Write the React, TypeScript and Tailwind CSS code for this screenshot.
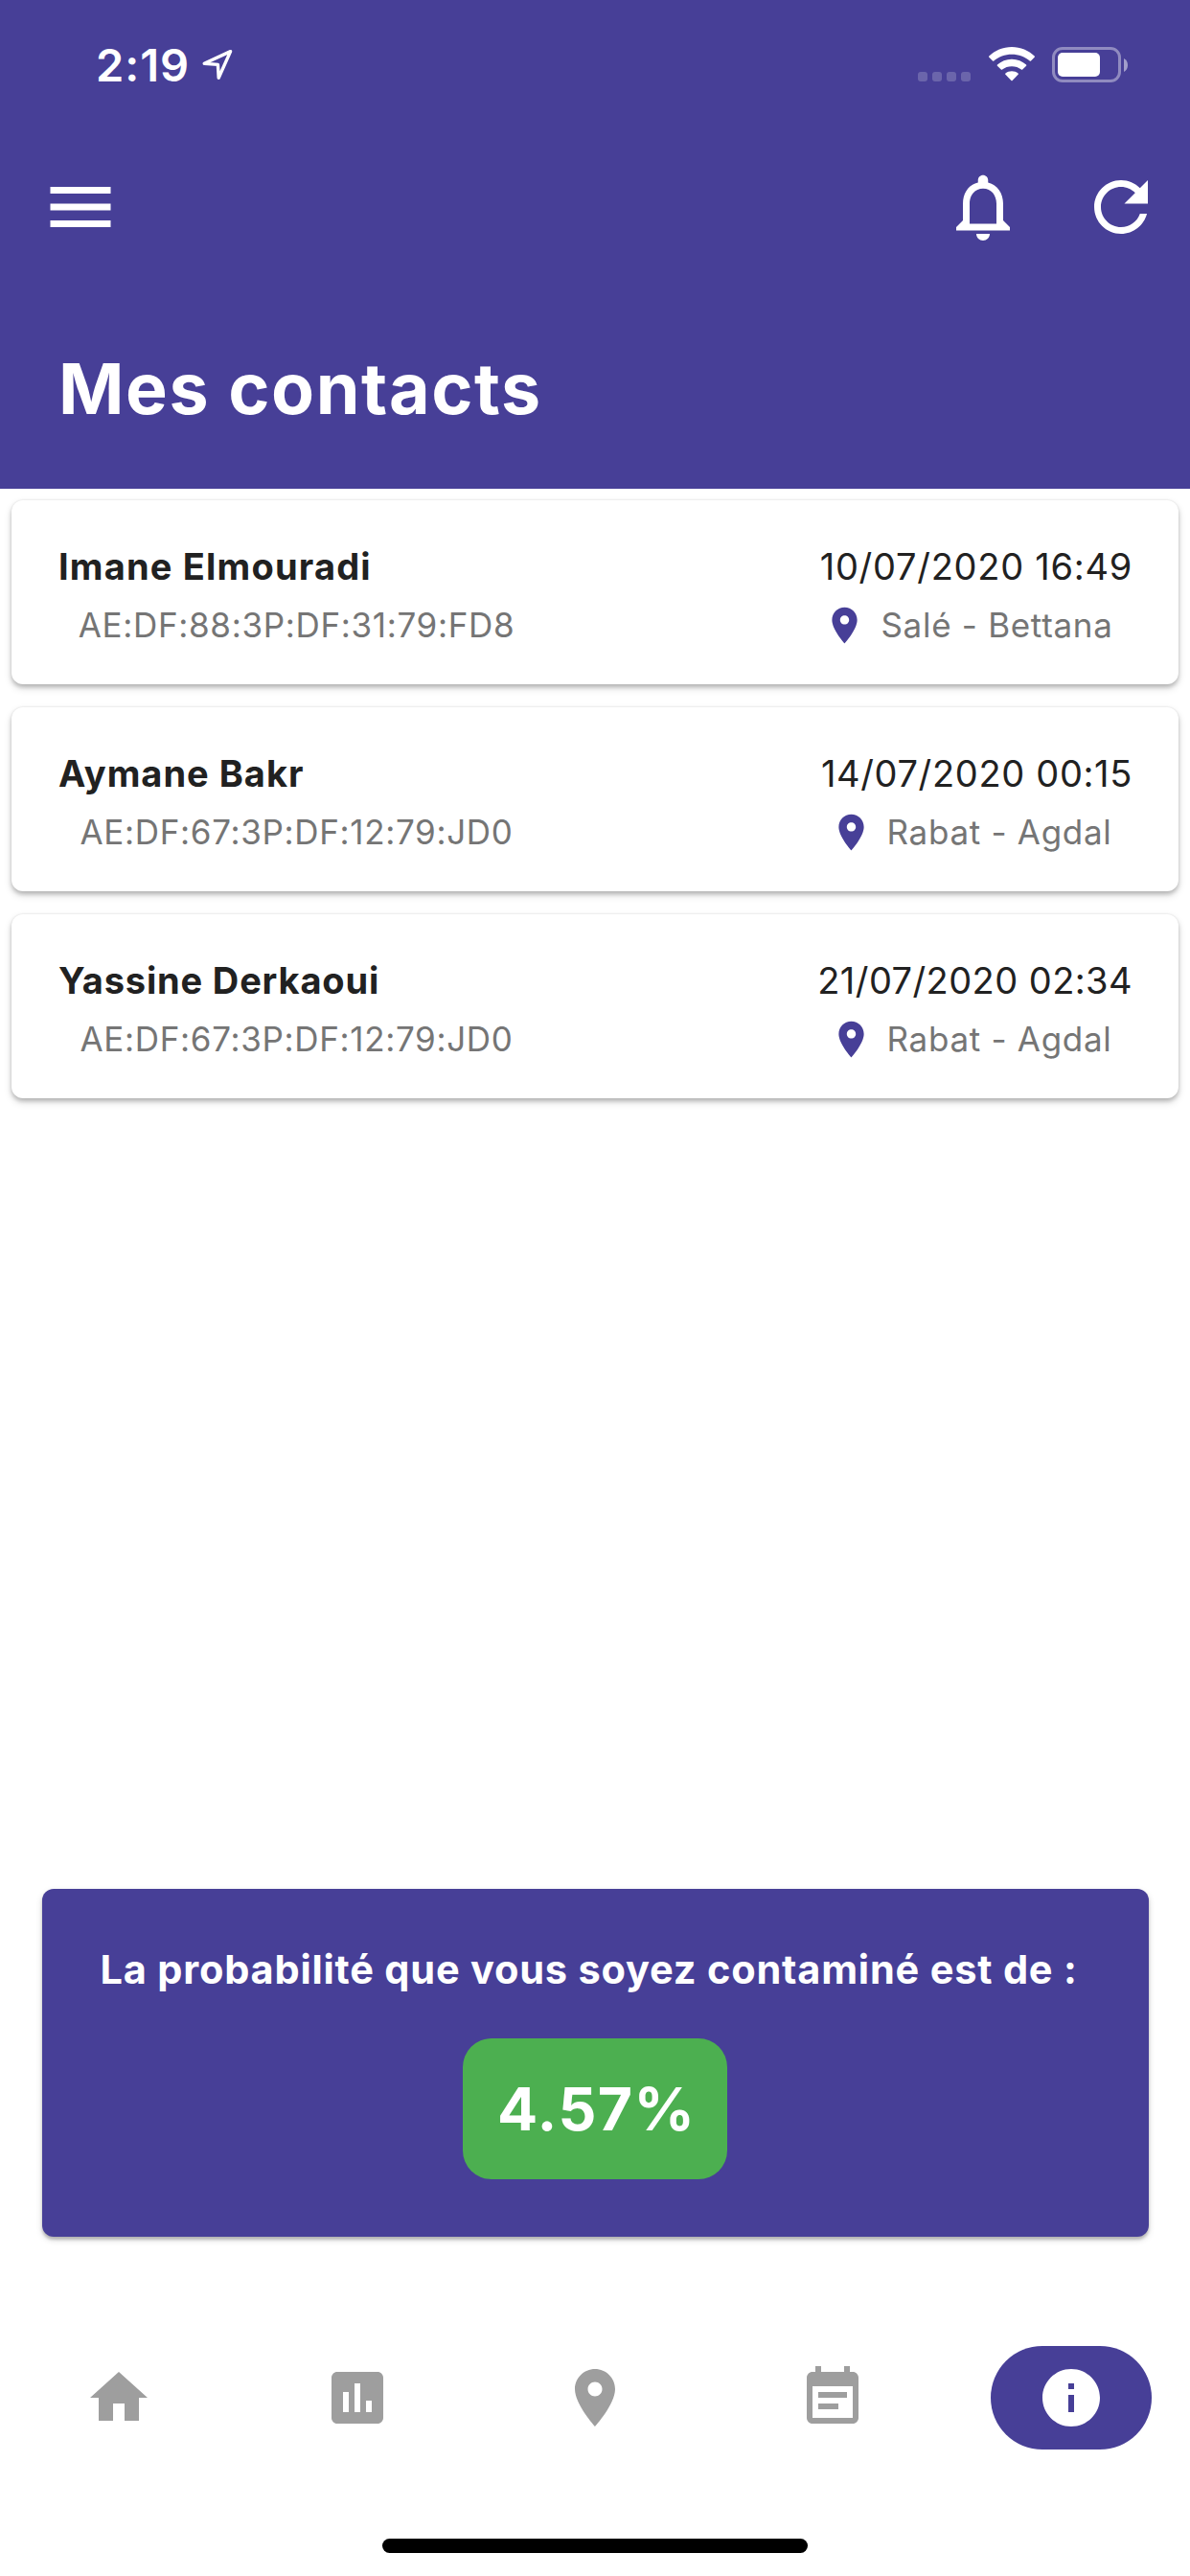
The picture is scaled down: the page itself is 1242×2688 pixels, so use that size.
import type { ReactNode } from "react";

const contacts = [
  {
    name: "Imane Elmouradi",
    nameTracking: "tracking-[1.19px]",
    device: "AE:DF:88:3P:DF:31:79:FD8",
    date: "10/07/2020 16:49",
    dateTracking: "tracking-[0.73px]",
    place: "Salé - Bettana",
    placeInset: "pr-px",
  },
  {
    name: "Aymane Bakr",
    nameTracking: "tracking-[1px]",
    device: "AE:DF:67:3P:DF:12:79:JD0",
    date: "14/07/2020 00:15",
    dateTracking: "tracking-[0.66px]",
    place: "Rabat - Agdal",
    placeInset: "pl-1",
  },
  {
    name: "Yassine Derkaoui",
    nameTracking: "tracking-[0.84px]",
    device: "AE:DF:67:3P:DF:12:79:JD0",
    date: "21/07/2020 02:34",
    dateTracking: "tracking-[0.43px]",
    place: "Rabat - Agdal",
    placeInset: "pl-1",
  },
];

const icons = {
  menu: "M3 18h18v-2H3v2zm0-5h18v-2H3v2zm0-7v2h18V6H3z",
  bell: "M12 22c1.1 0 2-.9 2-2h-4c0 1.1.9 2 2 2zm6-6v-5c0-3.07-1.63-5.64-4.5-6.32V4c0-.83-.67-1.5-1.5-1.5s-1.5.67-1.5 1.5v.68C7.64 5.36 6 7.92 6 11v5l-2 2v1h16v-1l-2-2zm-2 1H8v-6c0-2.48 1.51-4.5 4-4.5s4 2.02 4 4.5v6z",
  refresh:
    "M17.65 6.35C16.2 4.9 14.21 4 12 4c-4.42 0-7.99 3.58-7.99 8s3.57 8 7.99 8c3.73 0 6.84-2.55 7.73-6h-2.08c-.82 2.33-3.04 4-5.65 4-3.31 0-6-2.69-6-6s2.69-6 6-6c1.66 0 3.14.69 4.22 1.78L13 11h7V4l-2.35 2.35z",
  pin: "M12 2C8.13 2 5 5.13 5 9c0 5.25 7 13 7 13s7-7.75 7-13c0-3.87-3.13-7-7-7zm0 9.5c-1.38 0-2.5-1.12-2.5-2.5s1.12-2.5 2.5-2.5 2.5 1.12 2.5 2.5-1.12 2.5-2.5 2.5z",
  home: "M10 20v-6h4v6h5v-8h3L12 3 2 12h3v8z",
  chart:
    "M19 3H5c-1.1 0-2 .9-2 2v14c0 1.1.9 2 2 2h14c1.1 0 2-.9 2-2V5c0-1.1-.9-2-2-2zM9 17H7v-7h2v7zm4 0h-2V7h2v10zm4 0h-2v-4h2v4z",
  event:
    "M17 10H7v2h10v-2zm2-7h-1V1h-2v2H8V1H6v2H5c-1.11 0-1.99.9-1.99 2L3 19c0 1.1.89 2 2 2h14c1.1 0 2-.9 2-2V5c0-1.1-.9-2-2-2zm0 16H5V8h14v11zm-5-5H7v2h7v-2z",
  info: "M12 2C6.48 2 2 6.48 2 12s4.48 10 10 10 10-4.48 10-10S17.52 2 12 2zm1 15h-2v-6h2v6zm0-8h-2V7h2v2z",
};

function Icon({ name, className }: { name: keyof typeof icons; className: string }) {
  return (
    <svg viewBox="0 0 24 24" fill="currentColor" className={`block shrink-0 ${className}`} aria-hidden="true">
      <path d={icons[name]} />
    </svg>
  );
}

function StatusBar() {
  return (
    <div className="flex h-[135px] items-start justify-between pr-[65px] pl-[100px]">
      <div className="flex h-[135px] items-center">
        <span className="text-[47px] leading-none font-semibold tracking-[0.95px]">2:19</span>
        <svg viewBox="0 0 34 34" className="-mt-px ml-[12px] block h-[34px] w-[34px]" aria-hidden="true">
          <path
            d="M30.6 3.6 3.2 16.2 17.4 17.4 18.2 31.2Z"
            fill="none"
            stroke="white"
            strokeWidth="3.4"
            strokeLinejoin="round"
          />
        </svg>
      </div>
      <div className="flex h-[135px] items-center">
        <div className="mt-[25px] mr-[19px] flex gap-[5px]">
          {[0, 1, 2, 3].map((i) => (
            <span key={i} className="h-[10px] w-[10px] rounded-[3px] bg-white/20" />
          ))}
        </div>
        <svg viewBox="0 0 48 36" className="-mt-px block h-[36px] w-[48px]" fill="white" aria-hidden="true">
          <path d="M24 0C14.8 0 6.400 3.600.3 9.500Q-.2 10.200.3 10.800L4 14.500Q4.600 15 5.300 14.500C10.200 10.200 16.800 7.700 24 7.700S37.800 10.200 42.700 14.500Q43.400 15 44 14.500L47.700 10.800Q48.200 10.200 47.700 9.500C41.600 3.600 33.200 0 24 0Z" />
          <path d="M24 12.700C18.200 12.700 12.900 14.900 8.900 18.500Q8.400 19.200 8.900 19.800L12.800 23.600Q13.400 24 14.100 23.600C16.800 21.400 20.200 20.200 24 20.200S31.200 21.400 33.900 23.600Q34.600 24 35.200 23.600L39.100 19.800Q39.600 19.200 39.100 18.500C35.100 14.900 29.800 12.700 24 12.700Z" />
          <path d="M24 25.200C21.500 25.200 19.200 26.100 17.400 27.500Q16.900 28.200 17.400 28.800L23.400 35Q24 35.600 24.600 35L30.600 28.800Q31.100 28.200 30.600 27.500C28.800 26.100 26.500 25.200 24 25.200Z" />
        </svg>
        <div className="-mt-px ml-[18px] flex h-[37px] w-[72px] items-center rounded-[11px] border-[3px] border-white/40 pl-[3px]">
          <span className="h-[25px] w-[44px] rounded-[5px] bg-white" />
        </div>
        <svg viewBox="0 0 4 14" className="ml-[3px] block h-[14px] w-[4px]" aria-hidden="true">
          <path d="M0 0C2.600 1.200 4 4 4 7S2.600 12.800 0 14Z" fill="white" fillOpacity="0.5" />
        </svg>
      </div>
    </div>
  );
}

function ContactCard({ contact }: { contact: (typeof contacts)[number] }) {
  return (
    <li className="flex h-[192px] justify-between rounded-[12px] bg-white pt-[44px] pr-[48px] pl-[49px] shadow-[0_-1px_2px_rgba(0,0,0,0.05),0_3px_4px_rgba(0,0,0,0.2),0_4px_9px_rgba(0,0,0,0.14)]">
      <div className="flex w-[497px] flex-col">
        <h2 className={`text-[38px] leading-[50px] font-bold text-[#212121] ${contact.nameTracking}`}>
          {contact.name}
        </h2>
        <p className="mt-[12px] text-center text-[35px] leading-[49px] tracking-[0.67px] text-[#757575]">
          {contact.device}
        </p>
      </div>
      <div className="flex w-[342px] flex-col">
        <p className={`text-right text-[38px] leading-[50px] whitespace-nowrap text-[#212121] ${contact.dateTracking}`}>
          {contact.date}
        </p>
        <p
          className={`mt-[12px] flex items-center justify-center gap-[15px] text-[35px] leading-[49px] tracking-[0.7px] text-[#757575] ${contact.placeInset}`}
        >
          <Icon name="pin" className="h-[45px] w-[45px] text-[#473f97]" />
          {contact.place}
        </p>
      </div>
    </li>
  );
}

function NavItem({ children }: { children: ReactNode }) {
  return <li className="flex flex-1 items-center justify-center text-[#9e9e9e]">{children}</li>;
}

export default function App() {
  return (
    <div className="flex h-[2688px] w-[1242px] flex-col overflow-hidden bg-white font-['Inter',sans-serif]">
      <header className="flex h-[510px] shrink-0 flex-col bg-[#473f97] text-white">
        <StatusBar />
        <div className="flex h-[162px] items-center pr-[30px] pl-[42px]">
          <button aria-label="Menu" className="mr-auto">
            <Icon name="menu" className="h-[84px] w-[84px]" />
          </button>
          <button aria-label="Notifications" className="mr-[60px]">
            <Icon name="bell" className="h-[84px] w-[84px]" />
          </button>
          <button aria-label="Actualiser">
            <Icon name="refresh" className="h-[84px] w-[84px]" />
          </button>
        </div>
        <h1 className="mt-[65px] pl-[61px] text-[73.5px] leading-[88px] font-bold tracking-[1.59px]">Mes contacts</h1>
      </header>

      <main className="flex flex-1 flex-col">
        <ul className="flex flex-col gap-6 px-3 pt-3">
          {contacts.map((contact) => (
            <ContactCard key={contact.name} contact={contact} />
          ))}
        </ul>

        <section className="mx-[43.5px] mt-auto mb-[66px] flex h-[363px] flex-col rounded-[12px] bg-[#473f97] text-white shadow-[0_3px_3px_rgba(0,0,0,0.2),0_3px_7px_rgba(0,0,0,0.16)]">
          <p className="pt-[59px] pl-[61px] text-[41.5px] leading-[50px] font-bold tracking-[0.8px] whitespace-nowrap">
            La probabilité que vous soyez contaminé est de :
          </p>
          <div className="mx-auto mt-[47px] flex h-[147px] w-[276px] items-center rounded-[30px] bg-[#4caf50] pl-[36px]">
            <span className="text-[62.5px] leading-none font-bold tracking-[1.37px]">4.57%</span>
          </div>
        </section>
      </main>

      <nav className="h-[288px] shrink-0">
        <ul className="flex h-[204px]">
          <NavItem>
            <Icon name="home" className="h-[72px] w-[72px]" />
          </NavItem>
          <NavItem>
            <Icon name="chart" className="h-[72px] w-[72px]" />
          </NavItem>
          <NavItem>
            <Icon name="pin" className="h-[72px] w-[72px]" />
          </NavItem>
          <NavItem>
            <Icon name="event" className="h-[72px] w-[72px]" />
          </NavItem>
          <NavItem>
            <span className="flex h-[108px] w-[168px] items-center justify-center rounded-full bg-[#473f97] text-white">
              <Icon name="info" className="h-[72px] w-[72px]" />
            </span>
          </NavItem>
        </ul>
        <div className="mx-auto mt-[45px] h-[15px] w-[444px] rounded-full bg-black" />
      </nav>
    </div>
  );
}
